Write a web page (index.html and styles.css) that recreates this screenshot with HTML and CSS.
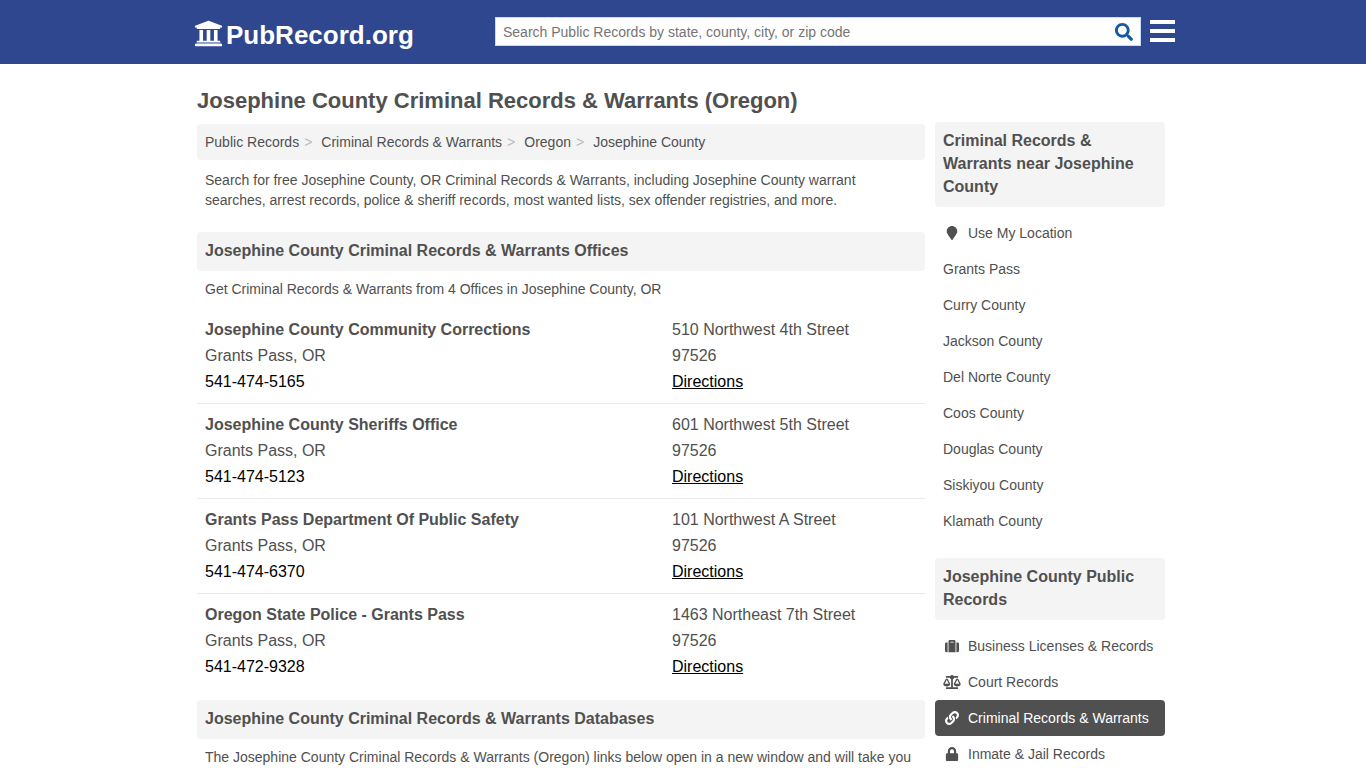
FILE: index.html
```html
<!DOCTYPE html>
<html lang="en">
<head>
<meta charset="utf-8">
<meta name="viewport" content="width=device-width, initial-scale=1">
<title>Josephine County Criminal Records &amp; Warrants (Oregon)</title>
<link rel="stylesheet" href="styles.css">
</head>
<body>
<header class="site-header">
  <div class="header-inner">
    <a class="logo" href="#">
      <svg class="logo-icon" viewBox="0 0 512 512" aria-hidden="true"><path d="M496 128v16a8 8 0 0 1-8 8h-24v12c0 6.627-5.373 12-12 12H60c-6.627 0-12-5.373-12-12v-12H24a8 8 0 0 1-8-8v-16a8 8 0 0 1 4.941-7.392l232-88a7.996 7.996 0 0 1 6.118 0l232 88A8 8 0 0 1 496 128zm-24 304H40c-13.255 0-24 10.745-24 24v16a8 8 0 0 0 8 8h464a8 8 0 0 0 8-8v-16c0-13.255-10.745-24-24-24zM96 192v192H60c-6.627 0-12 5.373-12 12v20h416v-20c0-6.627-5.373-12-12-12h-36V192h-64v192h-64V192h-64v192h-64V192H96z"/></svg>
      <span>PubRecord.org</span>
    </a>
    <form class="search" role="search">
      <input class="search-input" type="text" aria-label="Search public records" placeholder="Search Public Records by state, county, city, or zip code">
      <button class="search-button" type="button" aria-label="Search">
        <svg class="search-icon" viewBox="0 0 512 512" aria-hidden="true"><path d="M505 442.7L405.3 343c-4.5-4.5-10.6-7-17-7H372c27.6-35.3 44-79.7 44-128C416 93.1 322.9 0 208 0S0 93.1 0 208s93.1 208 208 208c48.3 0 92.7-16.4 128-44v16.3c0 6.4 2.5 12.5 7 17l99.7 99.7c9.4 9.4 24.6 9.4 33.9 0l28.3-28.3c9.4-9.4 9.4-24.6.1-34zM208 336c-70.7 0-128-57.2-128-128 0-70.7 57.2-128 128-128 70.7 0 128 57.2 128 128 0 70.7-57.2 128-128 128z"/></svg>
      </button>
    </form>
    <button class="menu-button" type="button" aria-label="Menu">
      <span class="bar"></span><span class="bar"></span><span class="bar"></span>
    </button>
  </div>
</header>

<div class="page">
  <h1 class="page-title">Josephine County Criminal Records &amp; Warrants (Oregon)</h1>
  <div class="columns">
    <main class="main">
      <nav class="breadcrumb" aria-label="Breadcrumb">
        <a href="#">Public Records</a><span class="sep">&gt;</span><a href="#">Criminal Records &amp; Warrants</a><span class="sep">&gt;</span><a href="#">Oregon</a><span class="sep">&gt;</span><a href="#">Josephine County</a>
      </nav>
      <p class="text intro">Search for free Josephine County, OR Criminal Records &amp; Warrants, including Josephine County warrant searches, arrest records, police &amp; sheriff records, most wanted lists, sex offender registries, and more.</p>

      <h2 class="section-title">Josephine County Criminal Records &amp; Warrants Offices</h2>
      <p class="text">Get Criminal Records &amp; Warrants from 4 Offices in Josephine County, OR</p>
      <div class="offices">
        <article class="office">
          <div><h3 class="office-name">Josephine County Community Corrections</h3><p>Grants Pass, OR</p><a class="phone" href="tel:541-474-5165">541-474-5165</a></div>
          <div><p>510 Northwest 4th Street</p><p>97526</p><a class="directions" href="#">Directions</a></div>
        </article>
        <article class="office">
          <div><h3 class="office-name">Josephine County Sheriffs Office</h3><p>Grants Pass, OR</p><a class="phone" href="tel:541-474-5123">541-474-5123</a></div>
          <div><p>601 Northwest 5th Street</p><p>97526</p><a class="directions" href="#">Directions</a></div>
        </article>
        <article class="office">
          <div><h3 class="office-name">Grants Pass Department Of Public Safety</h3><p>Grants Pass, OR</p><a class="phone" href="tel:541-474-6370">541-474-6370</a></div>
          <div><p>101 Northwest A Street</p><p>97526</p><a class="directions" href="#">Directions</a></div>
        </article>
        <article class="office">
          <div><h3 class="office-name">Oregon State Police - Grants Pass</h3><p>Grants Pass, OR</p><a class="phone" href="tel:541-472-9328">541-472-9328</a></div>
          <div><p>1463 Northeast 7th Street</p><p>97526</p><a class="directions" href="#">Directions</a></div>
        </article>
      </div>

      <h2 class="section-title">Josephine County Criminal Records &amp; Warrants Databases</h2>
      <p class="text">The Josephine County Criminal Records &amp; Warrants (Oregon) links below open in a new window and will take you</p>
    </main>

    <aside class="sidebar">
      <h2 class="section-title">Criminal Records &amp; Warrants near Josephine County</h2>
      <ul class="side-list">
        <li><a href="#"><svg class="side-icon" viewBox="0 0 384 512" aria-hidden="true"><path d="M172.268 501.67C26.97 291.031 0 269.413 0 192 0 85.961 85.961 0 192 0s192 85.961 192 192c0 77.413-26.97 99.031-172.268 309.67-9.535 13.774-29.93 13.773-39.464 0z"/></svg>Use My Location</a></li>
        <li><a href="#">Grants Pass</a></li>
        <li><a href="#">Curry County</a></li>
        <li><a href="#">Jackson County</a></li>
        <li><a href="#">Del Norte County</a></li>
        <li><a href="#">Coos County</a></li>
        <li><a href="#">Douglas County</a></li>
        <li><a href="#">Siskiyou County</a></li>
        <li><a href="#">Klamath County</a></li>
      </ul>
      <h2 class="section-title">Josephine County Public Records</h2>
      <ul class="side-list">
        <li><a href="#"><svg class="side-icon" viewBox="0 0 512 512" aria-hidden="true"><path d="M128 480h256V80c0-26.5-21.5-48-48-48H176c-26.5 0-48 21.5-48 48v400zm64-384h128v32H192V96zm320 80v256c0 26.5-21.5 48-48 48h-48V128h48c26.5 0 48 21.5 48 48zM96 480H48c-26.5 0-48-21.5-48-48V176c0-26.5 21.5-48 48-48h48v352z"/></svg>Business Licenses &amp; Records</a></li>
        <li><a href="#"><svg class="side-icon" viewBox="0 0 640 512" aria-hidden="true"><path d="M256 336h-.02c0-16.18 1.34-8.73-85.05-181.51-17.65-35.29-68.19-35.36-85.87 0C-2.06 328.75.02 320.33.02 336H0c0 44.18 57.31 80 128 80s128-35.82 128-80zM128 176l72 144H56l72-144zm511.98 160c0-16.18 1.34-8.73-85.05-181.51-17.65-35.29-68.19-35.36-85.87 0-87.12 174.26-85.04 165.84-85.04 181.51H384c0 44.18 57.31 80 128 80s128-35.82 128-80h-.02zM440 320l72-144 72 144H440zm88 128H352V153.25c23.51-10.29 41.16-31.48 46.39-57.25H528c8.84 0 16-7.16 16-16V48c0-8.84-7.16-16-16-16H383.64C369.04 12.68 346.09 0 320 0s-49.04 12.68-63.64 32H112c-8.84 0-16 7.16-16 16v32c0 8.84 7.16 16 16 16h129.61c5.23 25.76 22.87 46.96 46.39 57.25V448H112c-8.84 0-16 7.16-16 16v32c0 8.84 7.16 16 16 16h416c8.84 0 16-7.16 16-16v-32c0-8.84-7.16-16-16-16z"/></svg>Court Records</a></li>
        <li><a class="active" href="#" aria-current="page"><svg class="side-icon" viewBox="0 0 512 512" aria-hidden="true"><path d="M326.612 185.391c59.747 59.809 58.927 155.698.36 214.59-.11.12-.24.25-.36.37l-67.2 67.2c-59.27 59.27-155.699 59.262-214.96 0-59.27-59.26-59.27-155.7 0-214.96l37.106-37.106c9.84-9.84 26.786-3.3 27.294 10.606.648 17.722 3.826 35.527 9.69 52.721 1.986 5.822.567 12.262-3.783 16.612l-13.087 13.087c-28.026 28.026-28.905 73.66-1.155 101.96 28.024 28.579 74.086 28.749 102.325.51l67.2-67.19c28.191-28.191 28.073-73.757 0-101.83-3.701-3.694-7.429-6.564-10.341-8.569a16.037 16.037 0 0 1-6.947-12.606c-.396-10.567 3.348-21.456 11.698-29.806l21.054-21.055c5.521-5.521 14.182-6.199 20.584-1.731a152.482 152.482 0 0 1 20.522 17.197zM467.547 44.449c-59.261-59.262-155.69-59.27-214.96 0l-67.2 67.2c-.12.12-.25.25-.36.37-58.566 58.892-59.387 154.781.36 214.59a152.454 152.454 0 0 0 20.521 17.196c6.402 4.468 15.064 3.789 20.584-1.731l21.054-21.055c8.35-8.35 12.094-19.239 11.698-29.806a16.037 16.037 0 0 0-6.947-12.606c-2.912-2.005-6.64-4.875-10.341-8.569-28.073-28.073-28.191-73.639 0-101.83l67.2-67.19c28.239-28.239 74.3-28.069 102.325.51 27.75 28.3 26.872 73.934-1.155 101.96l-13.087 13.087c-4.35 4.35-5.769 10.79-3.783 16.612 5.864 17.194 9.042 34.999 9.69 52.721.509 13.906 17.454 20.446 27.294 10.606l37.106-37.106c59.271-59.259 59.271-155.699.001-214.959z"/></svg>Criminal Records &amp; Warrants</a></li>
        <li><a href="#"><svg class="side-icon" viewBox="0 0 448 512" aria-hidden="true"><path d="M400 224h-24v-72C376 68.2 307.8 0 224 0S72 68.2 72 152v72H48c-26.5 0-48 21.5-48 48v192c0 26.5 21.5 48 48 48h352c26.5 0 48-21.5 48-48V272c0-26.5-21.5-48-48-48zm-104 0H152v-72c0-39.7 32.3-72 72-72s72 32.3 72 72v72z"/></svg>Inmate &amp; Jail Records</a></li>
      </ul>
    </aside>
  </div>
</div>
</body>
</html>
```

FILE: styles.css
```css
* {
  box-sizing: border-box;
}

body {
  margin: 0;
  background: #fff;
  color: #505050;
  font-family: "Liberation Sans", Arial, sans-serif;
  font-size: 14px;
  line-height: 20px;
}

h1, h2, h3, p, ul {
  margin: 0;
  padding: 0;
}

a {
  color: inherit;
  text-decoration: none;
}

svg {
  fill: currentColor;
}

.site-header {
  background: #2e478f;
}

.header-inner {
  display: flex;
  align-items: center;
  max-width: 984px;
  min-height: 64px;
  margin: 0 auto;
  padding: 0 0 2px 3px;
}

.logo {
  display: flex;
  align-items: flex-start;
  gap: 3px;
  flex: 0 0 301px;
  padding-top: 8px;
  color: #fff;
  font-size: 26px;
  font-weight: 700;
  line-height: 32px;
}

.logo-icon {
  width: 29px;
  height: 29px;
}

.search {
  display: flex;
  flex: 1;
  height: 29px;
  border: 1px solid #c5dcf8;
  background: #fff;
}

.search-input {
  flex: 1;
  min-width: 0;
  padding: 2px 7px 0;
  border: 0;
  background: transparent;
  color: #505050;
  font: inherit;
}

.search-input::placeholder {
  color: #757575;
}

.search-button {
  display: flex;
  align-items: center;
  padding: 2px 7px 0;
  border: 0;
  background: transparent;
  color: #1259a5;
}

.search-icon {
  width: 18px;
  height: 18px;
}

.menu-button {
  display: flex;
  flex-direction: column;
  gap: 5px;
  width: 25px;
  margin-left: 9px;
  padding: 0;
  border: 0;
  background: transparent;
}

.bar {
  width: 100%;
  height: 4px;
  background: #fff;
}

.page {
  max-width: 972px;
  margin: 0 auto;
  padding: 22px 4px 0 0;
}

.page-title {
  font-size: 22px;
  line-height: 30px;
}

.columns {
  display: grid;
  grid-template-columns: minmax(0, 1fr) 230px;
  gap: 10px;
  padding-top: 6px;
}

.main {
  padding-top: 2px;
}

.breadcrumb {
  padding: 8px;
  border-radius: 4px;
  background: #f4f4f4;
}

.sep {
  padding: 0 9px 0 5px;
  color: #bbb;
}

.text {
  padding: 8px 8px 10px;
}

.intro {
  padding: 10px 8px 22px;
}

.section-title {
  padding: 7px 8px 9px;
  border-radius: 4px;
  background: #f4f4f4;
  font-size: 16px;
  line-height: 23px;
}

.offices {
  margin-bottom: 12px;
  font-size: 16px;
  line-height: 26px;
}

.office {
  display: grid;
  grid-template-columns: minmax(0, 467fr) minmax(0, 245fr);
  padding: 8px;
  border-bottom: 1px solid #ebebeb;
}

.office:last-child {
  border-bottom: 0;
}

.office-name {
  font-size: 16px;
}

.phone,
.directions {
  color: #000;
}

.directions {
  text-decoration: underline;
}

.side-list {
  padding: 8px 0 19px;
  list-style: none;
}

.side-list a {
  display: flex;
  align-items: center;
  gap: 7px;
  padding: 8px;
  border-radius: 4px;
}

.side-list .active {
  background: #505050;
  color: #fff;
}

.side-icon {
  width: 18px;
  height: 14px;
}
```
